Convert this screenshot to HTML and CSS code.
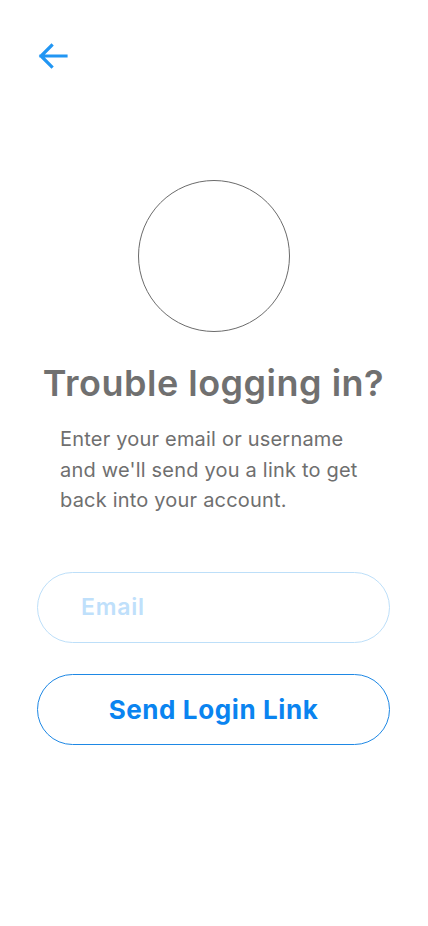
FILE: index.html
```html
<!DOCTYPE html>
<html>
<head>
  <title>Trouble logging in</title>
  <meta name="viewport" content="width=device-width, initial-scale=1">
  <link rel="stylesheet" href="styles.css">
</head>
<body>
  <div class="screen">
    <div class="top-bar">
      <button class="back-btn" aria-label="Back">
        <svg width="32" height="28" viewBox="0 0 32 28">
          <path d="M29 14H4M14.5 3.5L4 14l10.5 10.5" fill="none" stroke="#2196f3" stroke-width="3.2" stroke-linecap="square"/>
        </svg>
      </button>
    </div>

    <div class="avatar"></div>

    <h1 class="title">Trouble logging in?</h1>
    <p class="desc">Enter your email or username and we'll send you a link to get back into your account.</p>

    <form id="reset-form" class="form">
      <input type="text" class="field" placeholder="Email" name="email">
      <button type="submit" class="send-btn">Send Login Link</button>
    </form>
  </div>

  <script>
    document.getElementById("reset-form").addEventListener("submit", function(event) {
      event.preventDefault();
    });
  </script>
</body>
</html>
```

FILE: styles.css
```css
body {
  font-family: Inter, "Open Sans", Arial, sans-serif;
  background-color: #ffffff;
  margin: 0;
  padding: 0;
}
.screen {
  width: 428px;
  min-height: 926px;
  box-sizing: border-box;
  padding: 0 38px 0 37px;
}
.top-bar {
  display: flex;
  padding-top: 42px;
}
.back-btn {
  background: none;
  border: none;
  padding: 0;
  margin: 0;
  cursor: pointer;
  width: 32px;
  height: 28px;
}
.back-btn svg {
  display: block;
}
.avatar {
  width: 150px;
  height: 150px;
  border: 1px solid #6b6b6b;
  border-radius: 50%;
  margin: 110px auto 0 auto;
}
.title {
  margin: 28px -10px 0 -10px;
  text-align: center;
  font-size: 36px;
  font-weight: 600;
  color: #707070;
  letter-spacing: 0.5px;
  line-height: 46px;
}
.desc {
  margin: 18px 0 0 0;
  padding-left: 23px;
  padding-right: 18px;
  font-size: 20px;
  letter-spacing: 0.2px;
  line-height: 30.5px;
  color: #6f6f6f;
}
.form {
  display: flex;
  flex-direction: column;
  gap: 31px;
  margin-top: 56px;
}
.field {
  height: 71px;
  box-sizing: border-box;
  border: 1px solid #bddff9;
  border-radius: 36px;
  padding: 0 43px;
  font-family: inherit;
  font-size: 23px;
  font-weight: 600;
  letter-spacing: 0.8px;
  color: #555;
  outline: none;
}
.field::placeholder {
  color: #bfe0fb;
}
.send-btn {
  height: 71px;
  background: #ffffff;
  border: 1px solid #1e88e5;
  border-radius: 36px;
  font-family: inherit;
  font-size: 26px;
  font-weight: 700;
  letter-spacing: 0.6px;
  color: #0a84f0;
  cursor: pointer;
}
```
